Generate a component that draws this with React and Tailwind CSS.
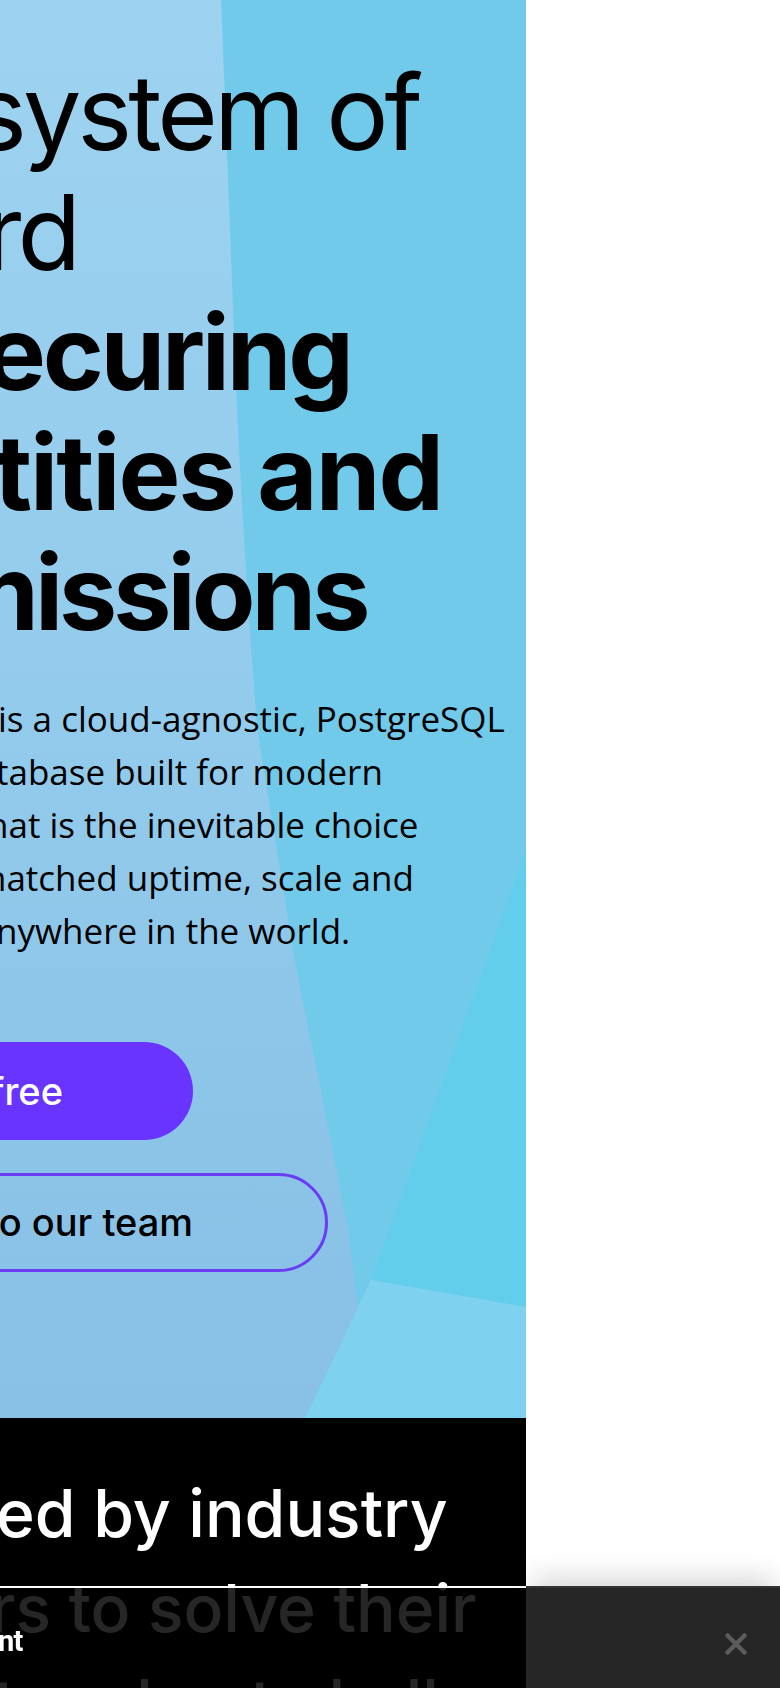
import React from 'react';

const HeroBackground = () => (
  <svg
    className="absolute inset-0 h-full w-full"
    viewBox="0 0 526 1418"
    preserveAspectRatio="none"
    xmlns="http://www.w3.org/2000/svg"
  >
    <defs>
      <linearGradient id="leftFade" x1="0" y1="0" x2="0" y2="1">
        <stop offset="0" stopColor="#9dd3f0" />
        <stop offset="0.5" stopColor="#93cbec" />
        <stop offset="1" stopColor="#88c0e6" />
      </linearGradient>
    </defs>
    <rect x="0" y="0" width="526" height="1418" fill="url(#leftFade)" />
    <path
      d="M221 0 L526 0 L526 1418 L375 1418 C366 1360 358 1313 348 1230 C330 1132 306 1020 293 951 C279 860 265 780 257 725 C247 600 239 460 235 362 C230 230 226 120 221 0 Z"
      fill="#72caea"
    />
    <polygon points="526,850 371,1280 526,1307" fill="#63cdec" />
    <polygon points="371,1280 526,1307 526,1418 305,1418 345,1335" fill="#7fd2ef" />
  </svg>
);

const App = () => {
  return (
    <div className="relative min-h-screen bg-white overflow-hidden">
      <main className="w-[526px] overflow-hidden">
        <section className="relative h-[1418px] overflow-hidden">
          <HeroBackground />
          <div className="relative pt-[52px] text-black">
            <h1 className="font-['Inter',sans-serif] text-[104px] leading-[120px] whitespace-nowrap">
              <div className="ml-[-28px] font-normal tracking-[-4px]">system of</div>
              <div className="ml-[-16px] font-normal tracking-[-4px]">rd</div>
              <div className="ml-[-16px] font-bold tracking-[-3.3px]">ecuring</div>
              <div className="ml-[-6px] font-bold tracking-[-2px]">tities and</div>
              <div className="ml-[-56px] font-bold tracking-[-4px]">missions</div>
            </h1>

            <div className="mt-[40px] font-['Open_Sans',sans-serif] text-[35px] leading-[53px] whitespace-nowrap">
              <p className="ml-[-2px]">is a cloud-agnostic, PostgreSQL</p>
              <p className="ml-[-4px]">tabase built for modern</p>
              <p className="ml-[-13px]">hat is the inevitable choice</p>
              <p className="ml-[-26px]">matched uptime, scale and</p>
              <p className="ml-[-4px]">nywhere in the world.</p>
            </div>

            <div className="mt-[85px] flex flex-col gap-[33px] font-['Inter',sans-serif] text-[38px] font-medium">
              <button className="ml-[-200px] flex h-[98px] w-[393px] items-center justify-end rounded-full bg-[#6934ff] pr-[130px] text-white">
                free
              </button>
              <button className="ml-[-200px] flex h-[99px] w-[528px] items-center justify-end rounded-full border-[3px] border-[#6a3df5] pr-[132px] text-black">
                o our team
              </button>
            </div>
          </div>
        </section>

        <section className="h-[270px] bg-black pt-[48px]">
          <h2 className="font-['Inter',sans-serif] text-[66px] font-medium leading-[95px] text-white whitespace-nowrap">
            <div className="ml-[-4px]">ed by industry</div>
            <div className="ml-[-10px]">rs to solve their</div>
            <div className="ml-[-6px]">toughest challenges</div>
          </h2>
        </section>
      </main>

      <div className="fixed inset-x-0 bottom-0 flex h-[102px]">
        <div className="w-[526px] border-t-2 border-white bg-black/85 pt-[36px]">
          <p className="ml-[-2px] font-['Roboto',sans-serif] text-[29px] font-bold leading-[34px] tracking-tight text-white">
            nt
          </p>
        </div>
        <div className="flex flex-1 items-start justify-end border-t-2 border-[#333333] bg-black/85 pr-[32px] pt-[44px] shadow-[0_-14px_26px_-6px_rgba(0,0,0,0.16)]">
          <button aria-label="Close" className="text-[#5b5b5b]">
            <svg width="24" height="24" viewBox="0 0 24 24" fill="none">
              <path d="M3.5 3.5L20.5 20.5M20.5 3.5L3.5 20.5" stroke="currentColor" strokeWidth="4.5" strokeLinecap="round" />
            </svg>
          </button>
        </div>
      </div>
    </div>
  );
};

export default App;
